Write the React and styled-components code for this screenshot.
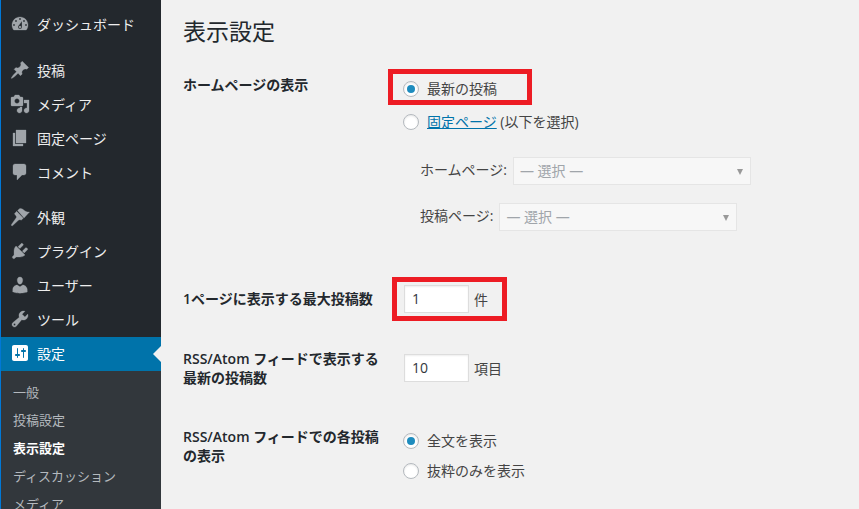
import React from 'react'
import styled, { createGlobalStyle } from 'styled-components'

const GlobalStyle = createGlobalStyle`
  html, body {
    height: 100%;
    margin: 0;
  }
  body {
    overflow: hidden;
    background: #f1f1f1;
    color: #444;
    font-family: "Open Sans", "Noto Sans CJK JP", sans-serif;
    font-size: 14px;
  }
`

const Page = styled.div`
  display: flex;
  height: 509px;
  overflow: hidden;
`

const Sidebar = styled.nav`
  flex: 0 0 161px;
  height: 100%;
  padding-top: 8px;
  overflow: hidden;
  box-sizing: border-box;
  background: #23282d;
  border-left: 1px solid #0078d7;
`

const MenuItem = styled.a`
  position: relative;
  display: flex;
  align-items: center;
  box-sizing: border-box;
  height: 34px;
  margin-top: ${({ $gap }) => $gap || 0}px;
  padding: 0 0 2px 9px;
  color: ${({ $active }) => ($active ? '#fff' : '#eee')};
  background: ${({ $active }) => ($active ? '#0073aa' : 'transparent')};
  svg {
    flex: 0 0 20px;
    width: 20px;
    height: 20px;
    margin-right: 7px;
    fill: ${({ $active }) => ($active ? '#fff' : '#a0a5aa')};
    stroke: ${({ $active }) => ($active ? 'none' : '#a0a5aa')};
    stroke-width: 0.3;
  }
  ${({ $active }) => $active && `
    &::after {
      content: '';
      position: absolute;
      right: 0;
      top: 50%;
      margin-top: -8px;
      border: 8px solid transparent;
      border-right-color: #f1f1f1;
    }
  `}
`

const SubMenu = styled.div`
  padding-top: 6px;
  background: #32373c;
  min-height: 140px;
`

const SubItem = styled.a`
  display: flex;
  align-items: center;
  height: 28px;
  padding-left: 12px;
  font-size: 13px;
  font-weight: ${({ $current }) => ($current ? 600 : 400)};
  color: ${({ $current }) => ($current ? '#fff' : '#b4b9be')};
`

const Content = styled.main`
  flex: 1;
  padding: 16px 0 0 22px;
`

const Title = styled.h1`
  margin: 0 0 29px;
  font-size: 23px;
  font-weight: 400;
  line-height: 30px;
  color: #23282d;
`

const Row = styled.section`
  display: grid;
  grid-template-columns: 221px 1fr;
  margin-bottom: ${({ $after }) => $after}px;
`

const RowLabel = styled.div`
  font-weight: 600;
  line-height: 19px;
  color: #23282d;
  padding-top: ${({ $top }) => $top || 0}px;
`

const Field = styled.div`
  display: flex;
  flex-direction: column;
  align-items: flex-start;
  padding-top: ${({ $top }) => $top || 0}px;
`

const Option = styled.label`
  position: relative;
  display: inline-flex;
  align-items: center;
  height: ${({ $height }) => $height}px;
  gap: 8px;
  line-height: 20px;
`

const RedFrame = styled.span`
  position: absolute;
  border: 5px solid #ed1c24;
  top: ${({ $top }) => $top}px;
  left: ${({ $left }) => $left}px;
  width: ${({ $width }) => $width}px;
  height: ${({ $height }) => $height}px;
  box-sizing: border-box;
  pointer-events: none;
`

const Radio = styled.span`
  display: flex;
  align-items: center;
  justify-content: center;
  box-sizing: border-box;
  width: 16px;
  height: 16px;
  margin-left: -1px;
  border-radius: 50%;
  background: #fff;
  border: 1px solid #b4b9be;
  box-shadow: inset 0 1px 2px rgba(0, 0, 0, 0.1);
  &::before {
    content: '';
    display: ${({ $checked }) => ($checked ? 'block' : 'none')};
    width: 8px;
    height: 8px;
    border-radius: 50%;
    background: #1e8cbe;
  }
`

const TextLink = styled.a`
  color: #0073aa;
  text-decoration: underline;
`

const SelectLine = styled.div`
  display: flex;
  align-items: center;
  gap: 6px;
  margin-left: 16px;
  margin-top: ${({ $top }) => $top}px;
`

const SelectLabel = styled.span`
  padding-bottom: 4px;
`

const FakeSelect = styled.div`
  display: flex;
  align-items: center;
  justify-content: space-between;
  box-sizing: border-box;
  width: 238px;
  height: 28px;
  padding: 0 7px 2px 6px;
  color: #a0a5aa;
  background: #f7f7f7;
  border: 1px solid #e5e5e5;
  &::after {
    content: '';
    margin-top: 4px;
    border: 3px solid transparent;
    border-top: 6px solid #999;
    border-bottom: 0;
  }
`

const NumberLine = styled.div`
  position: relative;
  display: flex;
  align-items: center;
  gap: 5px;
`

const NumberBox = styled.div`
  box-sizing: border-box;
  width: 65px;
  height: 28px;
  padding-left: 7px;
  line-height: 26px;
  color: #32373c;
  background: #fff;
  border: 1px solid #ddd;
  box-shadow: inset 0 1px 2px rgba(0, 0, 0, 0.07);
`

const icons = {
  dashboard: 'M3.76 16h12.48c1.1-1.37 1.76-3.11 1.76-5 0-4.42-3.58-8-8-8s-8 3.58-8 8c0 1.89.66 3.63 1.76 5zM10 4c.55 0 1 .45 1 1s-.45 1-1 1-1-.45-1-1 .45-1 1-1zM6 6c.55 0 1 .45 1 1s-.45 1-1 1-1-.45-1-1 .45-1 1-1zm8 0c.55 0 1 .45 1 1s-.45 1-1 1-1-.45-1-1 .45-1 1-1zm-5.37 5.55L12 7v6c0 1.1-.9 2-2 2s-2-.9-2-2c0-.57.24-1.08.63-1.45zM4 10c.55 0 1 .45 1 1s-.45 1-1 1-1-.45-1-1 .45-1 1-1zm12 0c.55 0 1 .45 1 1s-.45 1-1 1-1-.45-1-1 .45-1 1-1zm-5 3c0-.55-.45-1-1-1s-1 .45-1 1 .45 1 1 1 1-.45 1-1z',
  pin: 'M10.44 3.02l1.82-1.82 6.36 6.35-1.83 1.82c-1.05-.68-2.48-.57-3.41.36l-.75.75c-.92.93-1.04 2.35-.35 3.41l-1.83 1.82-2.41-2.41-2.8 2.79c-.42.42-3.38 2.71-3.8 2.29s1.86-3.39 2.28-3.81l2.79-2.79L4.1 9.36l1.83-1.82c1.05.69 2.48.57 3.4-.36l.75-.75c.93-.92 1.05-2.35.36-3.41z',
  media: 'M13 11V4c0-.55-.45-1-1-1h-1.67L9 1H5L3.67 3H2c-.55 0-1 .45-1 1v7c0 .55.45 1 1 1h10c.55 0 1-.45 1-1zM7 4.5c1.38 0 2.5 1.12 2.5 2.5S8.38 9.5 7 9.5 4.5 8.38 4.5 7 5.62 4.5 7 4.5zM14 6h5v10.5c0 1.38-1.12 2.5-2.5 2.5S14 17.88 14 16.5s1.12-2.5 2.5-2.5c.17 0 .34.02.5.05V9h-3V6zm-4 8.05V13h2v3.5c0 1.38-1.12 2.5-2.5 2.5S7 17.88 7 16.5 8.12 14 9.5 14c.17 0 .34.02.5.05z',
  page: 'M6 15V2h10v13H6zm-1 1h8v2H3V5h2v11z',
  comment: 'M5 2h9c1.1 0 2 .9 2 2v7c0 1.1-.9 2-2 2h-2l-5 5v-5H5c-1.1 0-2-.9-2-2V4c0-1.1.9-2 2-2z',
  brush: 'M7.6 3.4l1.9-1.7c1.5-.8 3 .2 4.5 1.5 1.5 1.2 3 2 5.5 1.8L14 11zM6.7 4.3l6.6 7-2.2 1.9c-1.2-.8-2-.6-3 .4l-5.4 5c-.8.6-1.8-.4-1.2-1.2l4.4-6.2c.8-1 .8-1.8-.2-2.8L4.4 6.8z',
  plugin: 'M13.11 4.36L9.87 7.6 8 5.73l3.24-3.24c.35-.34 1.05-.2 1.56.32.52.51.66 1.21.31 1.55zm-8 1.77l.91-1.12 9.01 9.01-1.19.84c-.71.71-2.63 1.16-3.82 1.16H6.14L4.9 17.26c-.59.59-1.54.59-2.12 0-.59-.58-.59-1.53 0-2.12l1.24-1.24v-3.88c0-1.13.4-3.19 1.09-3.89zm7.26 3.97l3.24-3.24c.34-.35 1.04-.21 1.55.31.52.51.66 1.21.31 1.55l-3.24 3.25z',
  user: 'M10 9.25c-2.27 0-2.73-3.44-2.73-3.44C7 4.02 7.82 2 9.97 2c2.16 0 2.98 2.02 2.71 3.81 0 0-.41 3.44-2.68 3.44zm0 2.57L12.72 10c2.39 0 4.52 2.33 4.52 4.53v2.49s-3.65 1.13-7.24 1.13c-3.65 0-7.24-1.13-7.24-1.13v-2.49c0-2.25 1.94-4.48 4.47-4.48z',
  tools: 'M16.68 9.77c-1.34 1.34-3.3 1.67-4.95.99l-5.41 6.52c-.99.99-2.59.99-3.58 0s-.99-2.59 0-3.57l6.52-5.42c-.68-1.65-.35-3.61.99-4.95 1.28-1.28 3.12-1.62 4.72-1.06l-2.89 2.89 2.82 2.82 2.86-2.87c.53 1.58.18 3.39-1.08 4.65zM3.81 16.21c.4.39 1.04.39 1.43 0 .4-.4.4-1.04 0-1.43-.39-.4-1.03-.4-1.43 0-.39.39-.39 1.03 0 1.43z',
  settings: 'M18 16V4c0-1.1-.9-2-2-2H4c-1.1 0-2 .9-2 2v12c0 1.1.9 2 2 2h12c1.1 0 2-.9 2-2zM8 11h1c.55 0 1 .45 1 1s-.45 1-1 1H8v1.5c0 .28-.22.5-.5.5s-.5-.22-.5-.5V13H6c-.55 0-1-.45-1-1s.45-1 1-1h1V5.5c0-.28.22-.5.5-.5s.5.22.5.5V11zm5-2h-1c-.55 0-1-.45-1-1s.45-1 1-1h1V5.5c0-.28.22-.5.5-.5s.5.22.5.5V7h1c.55 0 1 .45 1 1s-.45 1-1 1h-1v5.5c0 .28-.22.5-.5.5s-.5-.22-.5-.5V9z',
}

const menu = [
  { icon: 'dashboard', label: 'ダッシュボード' },
  { icon: 'pin', label: '投稿', gap: 12 },
  { icon: 'media', label: 'メディア' },
  { icon: 'page', label: '固定ページ' },
  { icon: 'comment', label: 'コメント' },
  { icon: 'brush', label: '外観', gap: 11 },
  { icon: 'plugin', label: 'プラグイン' },
  { icon: 'user', label: 'ユーザー' },
  { icon: 'tools', label: 'ツール' },
  { icon: 'settings', label: '設定', active: true },
]

const subMenu = ['一般', '投稿設定', '表示設定', 'ディスカッション', 'メディア']

const App = () => (
  <Page>
    <GlobalStyle />
    <Sidebar>
      {menu.map((item) => (
        <MenuItem key={item.label} $gap={item.gap} $active={item.active}>
          <svg viewBox='0 0 20 20'>
            <path d={icons[item.icon]} />
          </svg>
          {item.label}
        </MenuItem>
      ))}
      <SubMenu>
        {subMenu.map((label) => (
          <SubItem key={label} $current={label === '表示設定'}>{label}</SubItem>
        ))}
      </SubMenu>
    </Sidebar>
    <Content>
      <Title>表示設定</Title>
      <Row $after={54}>
        <RowLabel>ホームページの表示</RowLabel>
        <Field>
          <Option $height={27}>
            <RedFrame $top={-6} $left={-16} $width={144} $height={36} />
            <Radio $checked />
            最新の投稿
          </Option>
          <Option $height={39}>
            <Radio />
            <span><TextLink>固定ページ</TextLink> (以下を選択)</span>
          </Option>
          <SelectLine $top={16}>
            <SelectLabel>ホームページ:</SelectLabel>
            <FakeSelect>— 選択 —</FakeSelect>
          </SelectLine>
          <SelectLine $top={18}>
            <SelectLabel>投稿ページ:</SelectLabel>
            <FakeSelect>— 選択 —</FakeSelect>
          </SelectLine>
        </Field>
      </Row>
      <Row $after={36}>
        <RowLabel $top={4}>1ページに表示する最大投稿数</RowLabel>
        <Field>
          <NumberLine>
            <RedFrame $top={-8} $left={-12} $width={115} $height={44} />
            <NumberBox>1</NumberBox>
            件
          </NumberLine>
        </Field>
      </Row>
      <Row $after={40}>
        <RowLabel>RSS/Atom フィードで表示する<br />最新の投稿数</RowLabel>
        <Field $top={5}>
          <NumberLine>
            <NumberBox>10</NumberBox>
            項目
          </NumberLine>
        </Field>
      </Row>
      <Row $after={0}>
        <RowLabel>RSS/Atom フィードでの各投稿<br />の表示</RowLabel>
        <Field>
          <Option $height={27}>
            <Radio $checked />
            全文を表示
          </Option>
          <Option $height={33}>
            <Radio />
            抜粋のみを表示
          </Option>
        </Field>
      </Row>
    </Content>
  </Page>
)

export default App
